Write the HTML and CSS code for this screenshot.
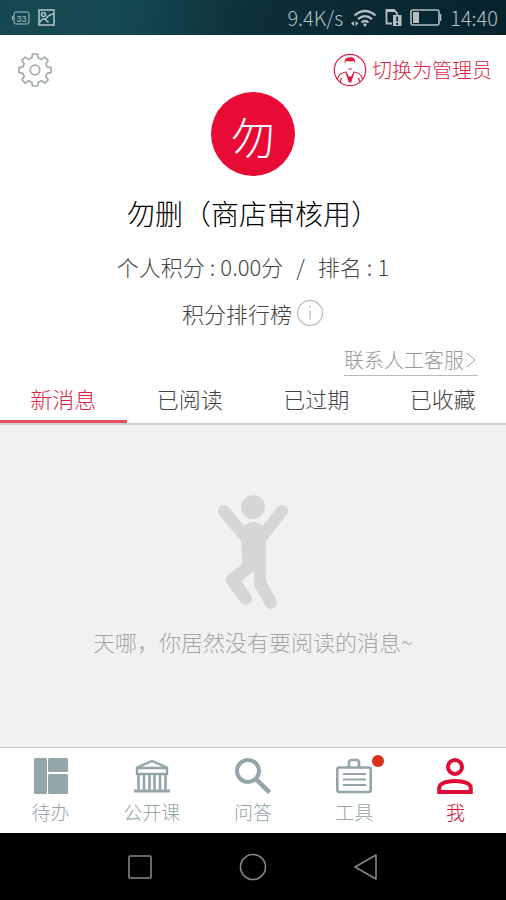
FILE: index.html
```html
<!DOCTYPE html>
<html lang="zh-CN">
<head>
<meta charset="utf-8">
<meta name="viewport" content="width=device-width, initial-scale=1">
<title>我</title>
<link rel="stylesheet" href="styles.css">
</head>
<body>
<div class="status">
  <div class="status-group">
    <svg width="18" height="14" viewBox="0 0 18 14" fill="none" stroke="currentColor"><rect x="2" y="1" width="15" height="12" rx="2"/><path d="M.5 5v4"/><text class="status-count" x="9.500" y="10.500" text-anchor="middle">33</text></svg>
    <svg width="17" height="17" viewBox="0 0 17 17" fill="none" stroke="currentColor" stroke-width="1.600"><rect x="1" y="1" width="15" height="15"/><circle cx="5.500" cy="5.500" r="2"/><path d="M1.500 14q3-6 6-3.500Q10 5.500 16 5M7.500 10.500l3 3"/></svg>
  </div>
  <div class="status-group status-right">
    <span>9.4K/s</span>
    <svg width="26" height="18" viewBox="0 0 26 18" fill="none" stroke="currentColor" stroke-width="2.200"><path d="M3.500 6.500q10.500-9 21 0M7 10.200q7-6 14 0M10.500 13.500q3.500-3 7 0"/><circle cx="14" cy="15.800" r="1.600" fill="currentColor" stroke="none"/><path d="m0 14.500 3-2.500v5zM7.500 14.500l-3-2.500v5z" fill="currentColor" stroke="none"/></svg>
    <svg width="17" height="19" viewBox="0 0 17 19" fill="none" stroke="currentColor" stroke-width="1.800"><path d="M7 15.500H1.500V2H9l3 3v2M2 3h8"/><rect x="8" y="7" width="8.500" height="11" fill="currentColor" stroke="none"/><path d="M12.200 8.500v5M12.200 15v2" stroke="#09262f"/></svg>
    <svg width="32" height="17" viewBox="0 0 32 17" fill="none" stroke="currentColor" stroke-width="1.600"><rect x="1" y="1" width="28" height="15" rx="2"/><path d="M30.500 5v7"/><path d="M3 3h6v11H3z" fill="currentColor" stroke="none"/></svg>
    <span>14:40</span>
  </div>
</div>

<main class="main">
  <section class="profile">
    <div class="toolbar">
      <button class="icon-button" type="button" aria-label="设置">
        <svg width="34" height="34" viewBox="0 0 34 34" fill="none" stroke="currentColor" stroke-width="1.700" stroke-linejoin="round"><path d="M14.500 1h5l.8 4q1.700.5 3.200 1.400l3.300-2.300 3.300 3.300-2.300 3.300q.8 1.500 1.300 3.200l3.900.7v5l-3.900.7q-.5 1.700-1.300 3.200l2.300 3.300-3.300 3.300-3.300-2.300q-1.500.9-3.200 1.300l-.8 3.900h-5l-.7-3.900q-1.700-.4-3.200-1.300l-3.400 2.300-3.300-3.300 2.300-3.300q-.9-1.500-1.300-3.200L1 19.600v-5l3.900-.7q.4-1.700 1.300-3.200L3.900 7.400l3.300-3.300 3.400 2.300Q12.100 5.500 13.800 5z"/><circle cx="17" cy="17" r="4.800"/></svg>
      </button>
      <button class="switch" type="button">
        <svg width="34" height="34" viewBox="0 0 34 34" fill="none" stroke="currentColor" stroke-width="1.200"><circle cx="17" cy="17" r="15.700"/><path d="M12 10.500c-1-4 1-6 4-6 3-1 7 0 6 6l-1-2.500q-4 .8-8 0z" fill="currentColor" stroke="none"/><path d="M15.200 16h3.600M4.500 26c1-5 5-6.500 8.500-7l3 9 1-5 1 5 3-9c3.500.5 7.500 2 8.500 7M8.500 25l-1.500 4M25.500 25l1.500 4"/><path d="m14 21 2.200 6.500L17 24l.8 3.500L20 21" stroke-width="1.500"/></svg>
        <span>切换为管理员</span>
      </button>
    </div>
    <div class="avatar">勿</div>
    <h1 class="name">勿删（商店审核用）</h1>
    <p class="score"><span>个人积分</span><span>:</span><span>0.00分</span><span class="slash">/</span><span>排名</span><span>:</span><span>1</span></p>
    <button class="ranking" type="button">
      <span>积分排行榜</span>
      <svg width="28" height="28" viewBox="0 0 28 28" fill="none" stroke="#c4c4c4" stroke-width="1.400"><circle cx="14" cy="14" r="12.500"/><path d="M14 11.500v9M14 7v2"/></svg>
    </button>
    <a class="service" href="#">联系人工客服<svg width="14" height="18" viewBox="0 0 14 18" fill="none" stroke="currentColor"><path d="m3 2 8 7-8 7"/></svg></a>
  </section>

  <nav class="tabs">
    <button class="tab tab-active" type="button">新消息</button>
    <button class="tab" type="button">已阅读</button>
    <button class="tab" type="button">已过期</button>
    <button class="tab" type="button">已收藏</button>
  </nav>

  <section class="empty">
    <svg width="70" height="114" viewBox="0 0 70 114" fill="#d6d6d6"><circle cx="35" cy="12" r="12"/><path d="m6 16 23 28M64 16 42 44" stroke="#d6d6d6" stroke-width="12" stroke-linecap="round"/><path d="M23 33Q35 21 48 33V86L58.500 105A6.300 6.300 0 0 1 47.500 111L36 91V76L23.500 86 33 100A6.300 6.300 0 0 1 22.500 107L8.500 88Q6.500 84 10 80L24 69Z"/></svg>
    <p class="empty-text">天哪，你居然没有要阅读的消息~</p>
  </section>
</main>

<nav class="bottom">
  <a class="item" href="#"><svg width="36" height="36" viewBox="0 0 36 36" fill="currentColor"><rect x="1" y="0" width="13" height="36" rx="1.500"/><rect x="15" y="0" width="20" height="14" rx="1.500"/><rect x="15" y="16" width="20" height="20" rx="1.500"/></svg><span>待办</span></a>
  <a class="item" href="#"><svg width="36" height="36" viewBox="0 0 36 36" fill="none" stroke="currentColor" stroke-width="2.400"><path d="M3 16V9.500L18 3l15 6.500V16zM3 10h30" stroke-linejoin="round"/><path d="M0 33h36" stroke-width="2.800"/><path d="M4.500 16v16M10 16v16M15.500 16v16M20.500 16v16M26 16v16M31.500 16v16" stroke-width="2.600"/></svg><span>公开课</span></a>
  <a class="item" href="#"><svg width="36" height="36" viewBox="0 0 36 36" fill="none" stroke="currentColor" stroke-width="4"><circle cx="13" cy="13" r="11"/><path d="m20 20 14.500 14.500" stroke-width="4.500"/></svg><span>问答</span></a>
  <a class="item" href="#"><span class="badge-wrap"><svg width="36" height="36" viewBox="0 0 36 36" fill="none" stroke="currentColor" stroke-width="2.600"><rect x="1.300" y="9.500" width="33.400" height="24.500" rx="2"/><path d="M13 9.500V4.500Q13 2 15.500 2h5Q23 2 23 4.500v5"/><path d="M7 16h23M7 21.500h23M7 27h23" stroke-width="2"/></svg><i class="badge"></i></span><span>工具</span></a>
  <a class="item item-active" href="#"><svg width="36" height="36" viewBox="0 0 36 36" fill="none" stroke="currentColor" stroke-width="4"><circle cx="18" cy="9" r="7"/><path d="M2.200 34v-4c0-9.500 31.600-9.500 31.600 0v4z"/></svg><span>我</span></a>
</nav>

<div class="system">
  <button class="key" type="button" aria-label="最近任务"><svg width="28" height="28" viewBox="0 0 28 28"><rect x="3" y="3" width="22" height="22" rx="1"/></svg></button>
  <button class="key" type="button" aria-label="主页"><svg width="28" height="28" viewBox="0 0 28 28"><circle cx="14" cy="14" r="12.500"/></svg></button>
  <button class="key" type="button" aria-label="返回"><svg width="28" height="28" viewBox="0 0 28 28"><path d="M24 2v24L3 14z"/></svg></button>
</div>
</body>
</html>
```
FILE: styles.css
```css
* {
  box-sizing: border-box;
}

body {
  margin: 0;
  min-height: 100vh;
  display: flex;
  flex-direction: column;
  background: #fff;
  color: #444;
  font-family: "Noto Sans CJK SC", sans-serif;
  font-weight: 300;
  font-size: 22px;
  line-height: 30px;
}

h1,
p {
  margin: 0;
}

button {
  padding: 0;
  border: 0;
  background: none;
  color: inherit;
  font: inherit;
}

a {
  color: inherit;
  text-decoration: none;
}

svg {
  display: block;
  flex: none;
}

.status {
  height: 35px;
  padding: 0 8px 0 12px;
  display: flex;
  align-items: center;
  justify-content: space-between;
  background: linear-gradient(100deg, #17484f 0%, #154950 25%, #0b2f38 50%, #06232c 100%);
  color: #a9c0c4;
}

.status-group {
  display: flex;
  align-items: center;
  gap: 8px;
}

.status-right {
  font-size: 20px;
  color: #b5bfc2;
}

.status-count {
  font-family: "Liberation Sans", sans-serif;
  font-size: 9px;
  fill: currentColor;
  stroke: none;
}

.main {
  flex: 1;
  display: flex;
  flex-direction: column;
}

.profile {
  padding-top: 18px;
  display: flex;
  flex-direction: column;
  align-items: center;
}

.toolbar {
  align-self: stretch;
  padding: 0 14px 0 18px;
  display: flex;
  justify-content: space-between;
}

.icon-button {
  color: #a3adb1;
}

.switch {
  display: flex;
  align-items: center;
  gap: 5px;
  color: #dc1f43;
  font-size: 20px;
  line-height: 34px;
}

.avatar {
  width: 84px;
  height: 84px;
  margin-top: 5px;
  border-radius: 50%;
  background: #e80b36;
  color: #fff;
  font-size: 44px;
  line-height: 88px;
  text-align: center;
}

.name {
  margin-top: 17px;
  color: #000;
  font-size: 28px;
  font-weight: 300;
  line-height: 40px;
}

.score {
  margin-top: 18px;
  display: flex;
  gap: 5px;
}

.slash {
  padding: 0 8px;
}

.ranking {
  margin-top: 17px;
  display: flex;
  align-items: center;
  gap: 4px;
}

.service {
  align-self: flex-end;
  margin: 17px 28px 0 0;
  display: flex;
  align-items: center;
  border-bottom: 1px solid #bbb;
  color: #999;
  font-size: 20px;
}

.tabs {
  display: flex;
  border-bottom: 2px solid #d0d0d0;
}

.tab {
  flex: 1;
  height: 47px;
  border-bottom: 3px solid transparent;
  line-height: 44px;
}

.tab-active {
  border-bottom-color: #e0505f;
  color: #dc1f43;
}

.empty {
  flex: 1;
  padding: 70px 0 40px;
  display: flex;
  flex-direction: column;
  align-items: center;
  gap: 17px;
  background: #f1f1f1;
  color: #a6a6a6;
}

.bottom {
  height: 86px;
  padding-top: 10px;
  display: flex;
  border-top: 1px solid #ccc;
  color: #93a5a9;
  font-size: 19px;
}

.item {
  flex: 1;
  display: flex;
  flex-direction: column;
  align-items: center;
  gap: 3px;
}

.item-active {
  color: #dd0c38;
}

.badge-wrap {
  position: relative;
}

.badge {
  position: absolute;
  top: -3px;
  right: -12px;
  width: 12px;
  height: 12px;
  border-radius: 50%;
  background: #d9301a;
}

.system {
  height: 67px;
  display: flex;
  align-items: center;
  justify-content: center;
  gap: 85px;
  background: #000;
}

.key svg {
  fill: none;
  stroke: #858585;
  stroke-width: 1.6px;
  stroke-linejoin: round;
}
```
